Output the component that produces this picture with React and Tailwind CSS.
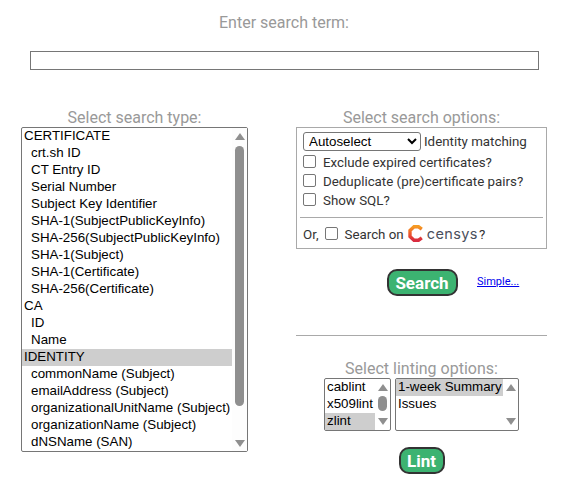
const search = [
  ["CERTIFICATE", 0], ["crt.sh ID", 1], ["CT Entry ID", 1], ["Serial Number", 1], ["Subject Key Identifier", 1],
  ["SHA-1(SubjectPublicKeyInfo)", 1], ["SHA-256(SubjectPublicKeyInfo)", 1], ["SHA-1(Subject)", 1], ["SHA-1(Certificate)", 1], ["SHA-256(Certificate)", 1],
  ["CA", 0], ["ID", 1], ["Name", 1], ["IDENTITY", 0, true], ["commonName (Subject)", 1], ["emailAddress (Subject)", 1],
  ["organizationalUnitName (Subject)", 1], ["organizationName (Subject)", 1], ["dNSName (SAN)", 1],
];

function Up() {
  return <svg width="10" height="7" viewBox="0 0 10 7"><path d="M5 0 L10 7 H0 Z" fill="#8f8f8f" /></svg>;
}
function Down() {
  return <svg width="10" height="7" viewBox="0 0 10 7"><path d="M5 7 L10 0 H0 Z" fill="#8f8f8f" /></svg>;
}

function Row({ children, selected, indent }) {
  return (
    <div className={`h-[17px] leading-[15px] text-[13.33px] text-black whitespace-nowrap font-['Liberation_Sans',sans-serif] ${indent ? "pl-[9px]" : "pl-[2px]"} ${selected ? "bg-[#cecece]" : ""}`}>
      {children}
    </div>
  );
}

function Censys() {
  return (
    <svg width="15" height="17" viewBox="0 0 15 17" className="shrink-0 block">
      <defs>
        <linearGradient id="cg" x1="0" y1="0" x2="0" y2="1">
          <stop offset="0" stopColor="#f59a23" />
          <stop offset="0.5" stopColor="#ee5a2b" />
          <stop offset="1" stopColor="#d92c3f" />
        </linearGradient>
      </defs>
      <path d="M13.8 4.2 L10.5 1.8 H6 L2 5.6 V11.4 L6 15.2 H10.5 L13.8 12.8" fill="none" stroke="url(#cg)" strokeWidth="3.4" />
    </svg>
  );
}

function Check({ className = "" }) {
  return <input type="checkbox" className={`appearance-none w-[13px] h-[13px] border border-[#767676] rounded-[2px] bg-white shrink-0 ${className}`} />;
}

function Heading({ children, className = "" }) {
  return <div className={`text-[16px] leading-[19px] text-[#999999] text-center ${className}`}>{children}</div>;
}

function Btn({ children, className = "" }) {
  return (
    <button className={`h-[27px] rounded-[10px] border-2 border-[#333333] bg-[#3cb371] text-white font-bold text-[17px] leading-[22px] ${className}`}>
      {children}
    </button>
  );
}

export default function App() {
  return (
    <div className="w-[568px] h-[489px] bg-white overflow-hidden font-['Roboto',sans-serif] text-[#333]">
      <Heading className="pt-[13px]">Enter search term:</Heading>
      <div className="mt-[19px] ml-[30px] w-[509px] h-[19px] border border-[#767676] bg-white" />
      <div className="mt-[38px] ml-[21px] flex gap-[48px]">
        <div className="w-[227px]">
          <Heading className="h-[19px]">Select search type:</Heading>
          <div className="relative h-[325px] border border-[#767676] rounded-[2px] bg-white">
            {search.map(([t, indent, sel]) => (
              <div key={t} className="w-[210px]">
                <Row indent={indent} selected={sel}>{t}</Row>
              </div>
            ))}
            <div className="absolute right-0 top-0 bottom-0 w-[15px] bg-[#fdfdfd] flex flex-col items-center justify-between pt-[5px] pb-[4px]">
              <Up />
              <Down />
            </div>
            <div className="absolute right-[3px] top-[18px] w-[9px] h-[260px] rounded-full bg-[#8f8f8f]" />
          </div>
        </div>
        <div className="w-[251px]">
          <Heading className="h-[19px]">Select search options:</Heading>
          <div className="h-[122px] border border-[#a9a9a9] text-[13.33px] leading-[16px] text-[#333333] px-[6px]">
            <div className="flex items-center h-[19px] mt-[4px]">
              <select className="w-[118px] h-[19px] border border-[#767676] rounded-[3px] font-['Liberation_Sans',sans-serif] text-[13.33px] text-black bg-white pl-[1px]" defaultValue="Autoselect">
                <option>Autoselect</option>
              </select>
              <span className="ml-[3px] pt-[1px]">Identity matching</span>
            </div>
            <div className="flex items-center h-[19px] mt-[1px]"><Check /><span className="ml-[7px] pt-[2px]">Exclude expired certificates?</span></div>
            <div className="flex items-center h-[19px]"><Check /><span className="ml-[7px] pt-[2px]">Deduplicate (pre)certificate pairs?</span></div>
            <div className="flex items-center h-[19px]"><Check /><span className="ml-[7px] pt-[2px]">Show SQL?</span></div>
            <div className="h-px bg-[#a9a9a9] mt-[8px] -mx-[3px]" />
            <div className="flex items-center h-[24px] mt-[3px]">
              <span className="pt-[3px]">Or,</span>
              <Check className="ml-[6px]" />
              <span className="ml-[7px] pt-[3px]">Search on</span>
              <span className="ml-[4px]"><Censys /></span>
              <span className="ml-[4px] pt-[2px] font-['Inter',sans-serif] text-[14.5px] text-[#4a4f5c] tracking-[0.4px]">censys</span>
              <span className="ml-[1px] pt-[3px]">?</span>
            </div>
          </div>
          <div className="relative mt-[20px] flex justify-center">
            <Btn className="w-[71px] ml-[1px]">Search</Btn>
            <a href="#" className="absolute left-[181px] top-[6px] text-[11px] leading-[14px] underline text-[#0000ee]">Simple...</a>
          </div>
          <div className="mt-[39px] h-px bg-[#a9a9a9]" />
          <Heading className="mt-[23px]">Select linting options:</Heading>
          <div className="flex justify-center gap-[4px]">
            <div className="relative w-[67px] h-[53px] border border-[#767676] rounded-[2px] bg-white">
              <div className="w-[50px]">
                <Row>cablint</Row>
                <Row>x509lint</Row>
                <Row selected>zlint</Row>
              </div>
              <div className="absolute right-0 top-0 bottom-0 w-[15px] flex flex-col items-center justify-between py-[5px]"><Up /><Down /></div>
              <div className="absolute right-[3px] top-[17px] w-[9px] h-[15px] rounded-full bg-[#8f8f8f]" />
            </div>
            <div className="relative w-[124px] h-[53px] border border-[#767676] rounded-[2px] bg-white">
              <div className="w-[107px]">
                <Row selected>1-week Summary</Row>
                <Row>Issues</Row>
              </div>
              <div className="absolute right-0 top-0 bottom-0 w-[15px] flex flex-col items-center justify-between py-[5px]"><Up /><Down /></div>
            </div>
          </div>
          <div className="mt-[16px] flex justify-center">
            <Btn className="w-[46px]">Lint</Btn>
          </div>
        </div>
      </div>
    </div>
  );
}
